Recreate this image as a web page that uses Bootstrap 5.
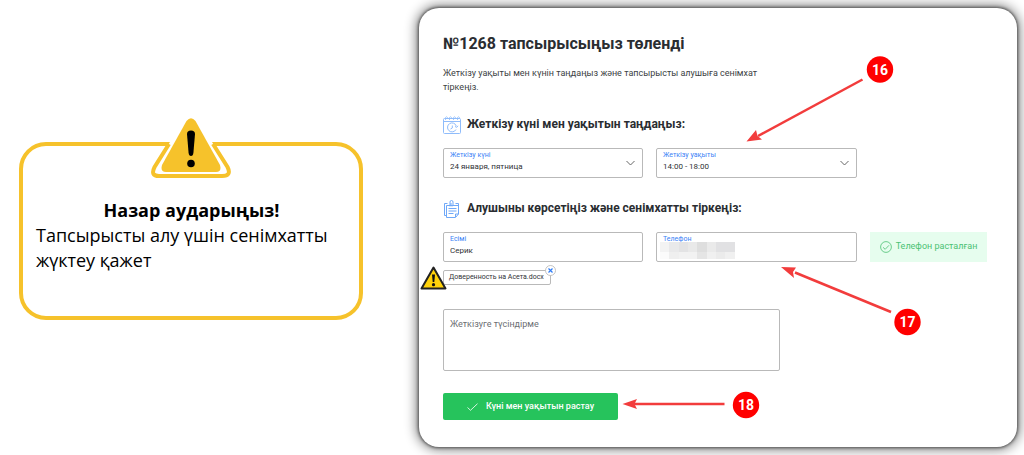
<!DOCTYPE html>
<html lang="kk">
<head>
<meta charset="utf-8">
<meta name="viewport" content="width=device-width, initial-scale=1">
<title>№1268 тапсырысыңыз төленді</title>
<link href="https://cdn.jsdelivr.net/npm/bootstrap@5.3.0/dist/css/bootstrap.min.css" rel="stylesheet">
<style>
  body { background: #fff; color: #2a2d31; font-family: Roboto, "Liberation Sans", sans-serif; }
  .guide { display: grid; grid-template-columns: 344fr 598fr; gap: 56px; padding: 8px 7px 8px 19px; }

  .notice { border: 4px solid #f6c22b; border-radius: 27px; padding: 52px 12px 43px 13px; margin-top: 6px;
            color: #000; font-family: "Open Sans", "Noto Sans", sans-serif; font-size: 18px; line-height: 25px; }
  .notice h2 { font-size: 18px; line-height: 25px; }
  .notice-sign { top: -28px; left: 50%; transform: translateX(-50%); }

  .order { border-radius: 20px; background: #fff; padding: 24px 30px 27px 24px; box-shadow: 0 0 3px 1px #555, 0 0 12px 3px #888; }
  .order h1 { font-size: 16px; line-height: 24px; }
  .intro { font-size: 9px; line-height: 14px; max-width: 330px; margin-top: 10px; color: #3c3f43; }
  .step { font-size: 12px; line-height: 20px; gap: 6px; margin: 20px 0 14px; }
  .step svg { margin-bottom: -1px; }
  .fields { display: grid; grid-template-columns: 200fr 201fr 117fr; gap: 13px; }
  .field { border: 1px solid #b9b9b9; border-radius: 2px; height: 30px; padding: 1px 6px; }
  .field label { font-size: 7px; line-height: 10px; color: #3b82f6; }
  .field select, .field input { appearance: none; border: 0; padding: 0; background: transparent; width: 100%;
            font-size: 8px; line-height: 14px; height: 14px; color: #303236; }
  .chevron { right: 7px; top: 11px; pointer-events: none; }
  .mask { left: 3px; top: 9px; }
  .confirmed { background: #e6fdee; color: #4cc274; font-size: 9px; }
  .file-chip { border: 1px solid #b9b9b9; border-radius: 2px; font-size: 7px; line-height: 13px; padding: 0 6px 0 5px; color: #303236; }
  .file-remove { top: -6px; right: -6px; width: 11px; height: 11px; }
  .file-warning { left: -24px; top: -5px; }
  .comment { border: 1px solid #b9b9b9; border-radius: 2px; width: 62%; height: 62px; padding: 8px 6px; font-size: 9px; line-height: 12px; resize: none; }
  .comment::placeholder { color: #6b6e72; opacity: 1; }
  .confirm { background: #26c35c; color: #fff; width: 175px; height: 27px; margin-top: 22px; border-radius: 2px; font-size: 9px; }
  .pins { inset: 0; pointer-events: none; }
</style>
</head>
<body>
<main class="guide align-items-center">
  <aside class="notice position-relative">
    <svg class="notice-sign position-absolute" width="80" height="62" viewBox="0 0 80 62" aria-hidden="true">
      <path d="M16 22H64V30H16Z" fill="#fff"/>
      <path d="M34 6Q40-2 46 6L77 50Q81 60 71 60H9Q-1 60 3 50Z" fill="#fff"/>
      <path d="M18 26L3.600 49Q-1 58 8 58H71Q81 58 76.500 49L62 26" fill="none" stroke="#f6c22b" stroke-width="4"/>
      <path d="M12 24H19L16.500 28H12ZM68 24H61L63.500 28H68Z" fill="#f6c22b"/>
      <path d="M35.500 3Q40-2.500 44.500 3L69 47Q71 54 65 54H15Q9 54 11 47Z" fill="#f6c22b"/>
      <path d="M36 16Q36 12.500 40 12.500T44 16L42.400 35Q42 38 40 38T37.600 35Z"/><circle cx="40" cy="45.500" r="3.800"/>
    </svg>
    <h2 class="fw-bold text-center mb-0">Назар аударыңыз!</h2>
    <p class="mb-0">Тапсырысты алу үшін сенімхатты жүктеу қажет</p>
  </aside>

  <section class="order position-relative">
    <h1 class="fw-bold mb-0">№1268 тапсырысыңыз төленді</h1>
    <p class="intro mb-0">Жеткізу уақыты мен күнін таңдаңыз және тапсырысты алушыға сенімхат тіркеңіз.</p>

    <h2 class="step fw-bold d-flex align-items-center">
      <svg width="18" height="18" viewBox="0 0 18 18" fill="none" stroke="#8fbcfb" aria-hidden="true">
        <rect x=".5" y="2.500" width="17" height="15" rx="1"/><path d="M1 5.500H17"/>
        <path d="M2.500 4V1.500Q3.500 0 4.500 1.500V3M6.500 4V1.500Q7.500 0 8.500 1.500V3M10.500 4V1.500Q11.500 0 12.500 1.500V3M14.500 4V1.500Q15.500 0 16.500 1.500V3" stroke-width=".8"/>
        <path d="M13 13.500A4.500 4.500 0 1 1 13.300 10M12 10.500L13.800 11.300L15 9.800M9.300 9.500V12L7.500 13"/>
      </svg>
      Жеткізу күні мен уақытын таңдаңыз:
    </h2>
    <div class="fields">
      <div class="field position-relative d-flex flex-column">
        <label for="day">Жеткізу күні</label>
        <select id="day"><option>24 января, пятница</option></select>
        <svg class="chevron position-absolute" width="9" height="6" viewBox="0 0 9 6" fill="none" stroke="#666" aria-hidden="true"><path d="M.5 1L4.500 5L8.500 1"/></svg>
      </div>
      <div class="field position-relative d-flex flex-column">
        <label for="time">Жеткізу уақыты</label>
        <select id="time"><option>14:00 - 18:00</option></select>
        <svg class="chevron position-absolute" width="9" height="6" viewBox="0 0 9 6" fill="none" stroke="#666" aria-hidden="true"><path d="M.5 1L4.500 5L8.500 1"/></svg>
      </div>
    </div>

    <h2 class="step fw-bold d-flex align-items-center">
      <svg width="18" height="18" viewBox="0 0 18 18" fill="none" stroke="#6fa8f8" aria-hidden="true">
        <path d="M4.500 3.500H1.500V15.500H3.500M12.500 3.500H15.500V14L12.500 17.500H3.500V5.500"/>
        <path d="M12.500 17V14H15.500M3.500 5.500H15M5.500 8.500H13.500M5.500 11H13.500M5.500 13.500H10.500"/>
        <path d="M7 6.500V2Q7 .5 8.500 .5T10 2V5Q10 6 9 6T8 5V3"/>
      </svg>
      Алушыны көрсетіңіз және сенімхатты тіркеңіз:
    </h2>
    <div class="fields">
      <div class="field position-relative d-flex flex-column">
        <label for="name">Есімі</label>
        <input id="name" type="text" value="Серик">
      </div>
      <div class="field position-relative d-flex flex-column">
        <label for="phone">Телефон</label>
        <input id="phone" type="tel">
        <svg class="mask position-absolute" width="75" height="17" viewBox="0 0 75 17" shape-rendering="crispEdges" aria-hidden="true">
          <path d="M0 0H9V10H0Z" fill="#f3f3f3"/><path d="M9 0H19V10H9Z" fill="#e9e9ea"/><path d="M19 0H28V10H19Z" fill="#e3e3e4"/><path d="M28 0H37V10H28Z" fill="#e9e9e9"/><path d="M37 0H47V10H37Z" fill="#dedede"/><path d="M47 0H56V10H47Z" fill="#eaeaea"/><path d="M56 0H75V10H56Z" fill="#e1e1e3"/>
          <path d="M0 10H9V17H0Z" fill="#fbfbfb"/><path d="M9 10H19V17H9Z" fill="#efefef"/><path d="M19 10H37V17H19Z" fill="#f2f2f2"/><path d="M37 10H47V17H37Z" fill="#e5e5e5"/><path d="M47 10H56V17H47Z" fill="#f0f0f0"/><path d="M56 10H65V17H56Z" fill="#ebebeb"/><path d="M65 10H75V17H65Z" fill="#f0f0f0"/>
        </svg>
      </div>
      <div class="confirmed d-flex align-items-center justify-content-center gap-1 text-nowrap">
        <svg width="12" height="12" viewBox="0 0 12 12" fill="none" stroke="#4cc274" aria-hidden="true"><circle cx="6" cy="6" r="5.400" stroke-width=".8"/><path d="M3 6.300L5.200 8.300L9 4.300" stroke-width=".8"/></svg>
        Телефон расталған
      </div>
    </div>
    <div class="d-flex mt-2">
      <div class="file-chip position-relative">
        <svg class="file-warning position-absolute" width="27" height="24" viewBox="0 0 27 24" aria-hidden="true">
          <path d="M13.500 1.500L25.500 22.500H1.500Z" fill="#ffd20a" stroke="#222" stroke-width="2" stroke-linejoin="round"/>
          <path d="M12 8.500H15L14.300 16H12.700Z" fill="#111"/><circle cx="13.500" cy="18.700" r="1.600" fill="#111"/>
        </svg>
        Доверенность на Асета.docx
        <button type="button" class="file-remove position-absolute border-0 bg-transparent p-0 d-flex" aria-label="Жою">
          <svg width="11" height="11" viewBox="0 0 11 11"><circle cx="5.500" cy="5.500" r="5" fill="#fff" stroke="#b5b5b5" stroke-width=".8"/><path d="M3.500 3.500L7.500 7.500M7.500 3.500L3.500 7.500" stroke="#2f7df6" stroke-width="1.200"/></svg>
        </button>
      </div>
    </div>

    <textarea class="comment d-block mt-4" aria-label="Жеткізуге түсіндірме" placeholder="Жеткізуге түсіндірме"></textarea>
    <button type="button" class="confirm btn p-0 d-flex align-items-center justify-content-center gap-2 fw-medium">
      <svg width="11" height="8" viewBox="0 0 11 8" fill="none" stroke="#fff" stroke-width=".8" aria-hidden="true"><path d="M.5 4.500L3.500 7.300L10.500 .7"/></svg>
      Күні мен уақытын растау
    </button>

    <svg class="pins position-absolute w-100 h-100" viewBox="0 0 598 439" preserveAspectRatio="xMinYMin meet" font-family="Roboto, sans-serif" font-size="14" font-weight="700" text-anchor="middle">
      <g stroke="#f23c3c" stroke-width="2.500"><path d="M443.500 71.500L339 128"/><path d="M472 304L376 264.500"/><path d="M305.500 396H215"/></g>
      <g fill="#f23c3c"><path d="M327.500 133.500L337 122L338.500 128L343 131.500Z"/><path d="M362 259L377 259.500L374 264L375 270Z"/><path d="M203.500 396L218 391L215.500 396L218 401Z"/></g>
      <g fill="#f00"><circle cx="461" cy="61.500" r="13.200"/><circle cx="488.500" cy="314" r="13.200"/><circle cx="327" cy="397" r="13.200"/></g>
      <g fill="#fff"><text x="461" y="67">16</text><text x="488.500" y="319">17</text><text x="327" y="402">18</text></g>
    </svg>
  </section>
</main>
<script src="https://cdn.jsdelivr.net/npm/bootstrap@5.3.0/dist/js/bootstrap.bundle.min.js"></script>
</body>
</html>
